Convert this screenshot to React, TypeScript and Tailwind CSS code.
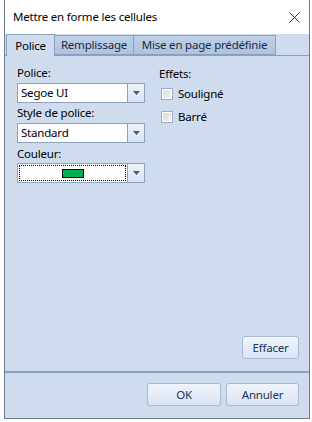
import React from "react";

// Sélecteur déroulant (liste + bouton flèche)
function Combo({ children }: { children: React.ReactNode }) {
  return (
    <div className="flex h-[20px] w-[128px] border border-[#8ea2c0] bg-white">
      <div className="flex-1 flex items-center overflow-hidden">{children}</div>
      <div className="w-[17px] border-l border-[#8ea2c0] bg-gradient-to-b from-[#eef3fa] to-[#d9e4f3] flex items-center justify-center">
        <svg width="7" height="4" viewBox="0 0 7 4">
          <path d="M0 0 L7 0 L3.5 4 Z" fill="#4a5870" />
        </svg>
      </div>
    </div>
  );
}

function Checkbox({ label }: { label: string }) {
  return (
    <div className="flex items-center h-[12px] gap-[5px] pl-[2px]">
      <div className="w-[12px] h-[12px] border border-[#9aadc9] bg-white p-[1px]">
        <div className="w-full h-full bg-gradient-to-br from-[#dcdcdc] to-[#f2f2f2]" />
      </div>
      <span className="text-[11.5px] leading-[16px] text-black">{label}</span>
    </div>
  );
}

function Button({ label, w }: { label: string; w: string }) {
  return (
    <button
      className={`${w} h-[23px] rounded-[3px] border border-[#a9b9d3] bg-gradient-to-b from-[#f0f4fb] to-[#d9e4f3] text-[11.5px] leading-[16px] text-[#1b3556]`}
    >
      {label}
    </button>
  );
}

export default function App() {
  return (
    <div
      className="w-[312px] h-[422px] bg-white pl-[4px] tracking-[-0.2px]"
      style={{ fontFamily: '"Noto Sans", "Open Sans", sans-serif' }}
    >
      <div className="w-[306px] h-[419px] flex flex-col border-l border-r border-b border-[#707b8c] bg-[#cfdcee]">
        {/* Barre de titre */}
        <div className="h-[34px] bg-white flex items-center justify-between pl-[8px] pr-[9px]">
          <span className="text-[11.5px] leading-[16px] text-black">
            Mettre en forme les cellules
          </span>
          <svg width="11" height="11" viewBox="0 0 11 11">
            <path d="M0.5 0.5 L10.5 10.5 M10.5 0.5 L0.5 10.5" stroke="#1a1a1a" strokeWidth="0.9" />
          </svg>
        </div>

        {/* Onglets */}
        <div className="h-[22px] flex items-end pl-[1px] border-b border-[#8aa0c1]">
          <div className="h-[22px] w-[49px] border border-b-0 border-[#8aa0c1] bg-[#cfdcee] flex items-center justify-center text-[11.5px] text-black -mb-px relative z-10">
            Police
          </div>
          <div className="h-[20px] w-[79px] border border-l-0 border-[#8aa0c1] bg-gradient-to-b from-[#bfd0e7] to-[#aec3df] flex items-center justify-center text-[11.5px] text-[#1a2a40]">
            Remplissage
          </div>
          <div className="h-[20px] w-[142px] border border-l-0 border-[#8aa0c1] bg-gradient-to-b from-[#bfd0e7] to-[#aec3df] flex items-center justify-center text-[11.5px] text-[#1a2a40]">
            Mise en page prédéfinie
          </div>
        </div>

        {/* Contenu de l'onglet */}
        <div className="h-[317px] flex flex-col border-b-2 border-[#8a9ebf] pt-[9px] pl-[12px] pr-[10px] pb-[12px]">
          <div className="flex gap-[14px]">
            <div className="flex flex-col w-[128px]">
              <span className="text-[11.5px] leading-[16px] text-black">Police:</span>
              <div className="mt-[2px]">
                <Combo>
                  <span className="pl-[3px] text-[11.5px] leading-[16px] text-black">Segoe UI</span>
                </Combo>
              </div>
              <span className="mt-[2px] text-[11.5px] leading-[16px] text-black">Style de police:</span>
              <div className="mt-[2px]">
                <Combo>
                  <span className="pl-[3px] text-[11.5px] leading-[16px] text-black">Standard</span>
                </Combo>
              </div>
              <span className="mt-[3px] text-[11.5px] leading-[16px] text-black">Couleur:</span>
              <div className="mt-[1px]">
                <Combo>
                  <div className="m-[1px] w-full h-[16px] border border-dotted border-black flex items-center justify-center">
                    <div className="w-[22px] h-[9px] bg-[#00b050] border border-black" />
                  </div>
                </Combo>
              </div>
            </div>
            <div className="flex flex-col">
              <span className="pt-[1px] text-[11.5px] leading-[16px] text-black">Effets:</span>
              <div className="mt-[6px] flex flex-col gap-[11px]">
                <Checkbox label="Souligné" />
                <Checkbox label="Barré" />
              </div>
            </div>
          </div>
          <div className="mt-auto flex justify-end">
            <Button label="Effacer" w="w-[57px]" />
          </div>
        </div>

        {/* Boutons du bas */}
        <div className="flex-1 flex justify-end items-start pt-[10px] pr-[10px] gap-[5px]">
          <Button label="OK" w="w-[74px]" />
          <Button label="Annuler" w="w-[73px]" />
        </div>
      </div>
    </div>
  );
}
